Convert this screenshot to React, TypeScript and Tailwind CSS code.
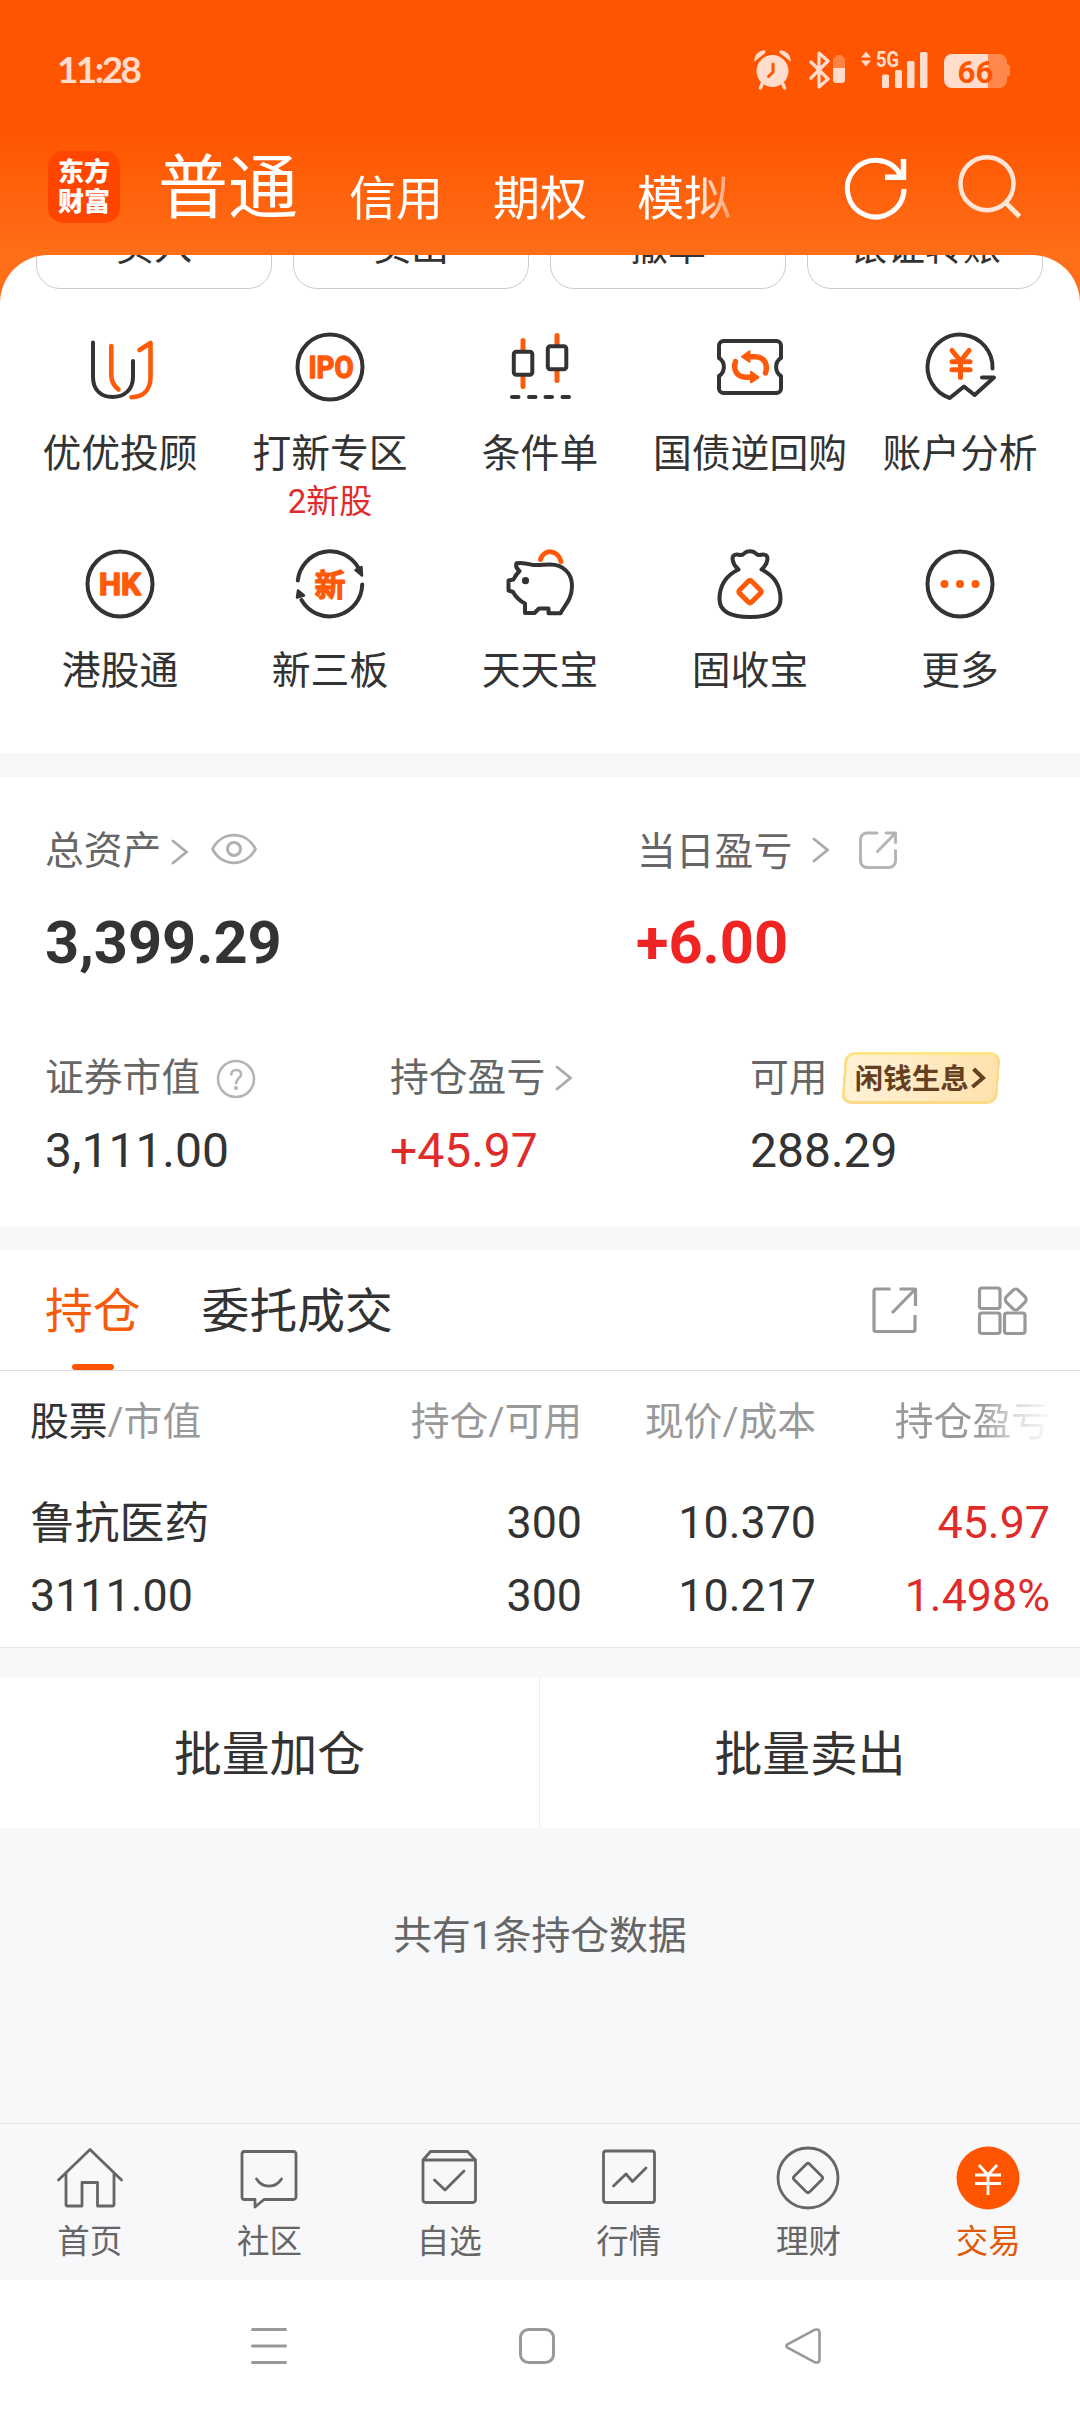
import type { ReactNode } from "react";

const FONT = "font-['Roboto','Noto_Sans_CJK_SC',sans-serif]";

/* ---------- status bar ---------- */

function StatusBar() {
  return (
    <div className="flex h-[140px] items-center pl-[57px] pr-[70px] text-white">
      <span className="mb-[4px] font-['Lato','Roboto',sans-serif] text-[37px] leading-none font-bold tracking-[-2.6px] text-[#ffdccb]">
        11:28
      </span>
      <div className="ml-auto flex items-center">
        <svg width="38" height="40" viewBox="754 50 38 40" fill="#ffdccb">
          <circle cx="772.5" cy="71" r="16" />
          <path d="M755 60a10 10 0 0 1 9-9c1 0 1 1 0 2zM790 60a10 10 0 0 0-9-9c-1 0-1 1 0 2z" stroke="#ffdccb" strokeWidth="1.6" />
          <path d="M762 84l-1.500 4M783 84l1.500 4" stroke="#ffdccb" strokeWidth="3.500" strokeLinecap="round" />
          <path d="M773 64v8l-4.500 4.500" fill="none" stroke="#ff5500" strokeWidth="3" strokeLinecap="round" />
        </svg>
        <svg className="ml-[17px]" width="37" height="40" viewBox="809 50 37 40">
          <path d="M811 62l17 17-9 8V53l9 8-17 17" fill="none" stroke="#ffdccb" strokeWidth="3.200" strokeLinejoin="round" strokeLinecap="round" />
          <path d="M833 68V60a3 3 0 0 1 3-3v-1a1 1 0 0 1 1-1h4a1 1 0 0 1 1 1v1a3 3 0 0 1 3 3v8z" fill="#ff8345" />
          <path d="M833 68h12v12a3 3 0 0 1-3 3h-6a3 3 0 0 1-3-3z" fill="#ffdccb" />
        </svg>
        <svg className="ml-[14px] overflow-visible" width="68" height="40" viewBox="860 50 68 40" fill="#ffdccb">
          <path d="M866 51.500l5 6h-10zM866 66.500l5-6h-10z" />
          <text x="876" y="67" textLength="23" lengthAdjust="spacingAndGlyphs" className="font-['Roboto',sans-serif] text-[22px] font-bold">
            5G
          </text>
          <rect x="882" y="74.500" width="7" height="13.500" rx="1.500" />
          <rect x="895" y="70" width="7" height="18" rx="1.500" />
          <rect x="907" y="61" width="7.500" height="27" rx="1.500" />
          <rect x="920" y="52" width="7.500" height="36" rx="1.500" />
        </svg>
        <svg className="ml-[15px]" width="67" height="40" viewBox="943 50 67 40">
          <path d="M988 54h11a8 8 0 0 1 8 8v2.500a2.500 2.500 0 0 1 3 2.500v7a2.500 2.500 0 0 1-3 2.500V80a8 8 0 0 1-8 8h-11z" fill="#ff884c" />
          <path d="M988 54h-36a8 8 0 0 0-8 8v18a8 8 0 0 0 8 8h36z" fill="#ffdccb" />
          <text x="957.500" y="83" textLength="36" lengthAdjust="spacingAndGlyphs" fill="#ff5500" className="font-['Roboto',sans-serif] text-[32px] font-bold">
            66
          </text>
        </svg>
      </div>
    </div>
  );
}

/* ---------- header ---------- */

function Header() {
  return (
    <header className="flex h-[115px] pl-[48px] text-white">
      <div className="mt-[11px] flex h-[72px] w-[72px] flex-col items-center justify-center rounded-[15px] bg-[#ff4600] text-[26px] leading-[30px] font-black">
        <span>东方</span>
        <span>财富</span>
      </div>
      <span className="ml-[38px] mt-[14px] text-[70px] leading-[70px]">普通</span>
      <nav className="ml-[51px] mt-[35px] flex h-[47px] w-[389px] gap-[50px] text-[47px] leading-[47px] [mask-image:linear-gradient(to_right,black_345px,transparent_405px)]">
        <span>信用</span>
        <span>期权</span>
        <span>模拟</span>
      </nav>
      <svg className="ml-[105px] mt-[14px]" width="66" height="68" viewBox="843 154 66 68" fill="none" stroke="#fff" strokeWidth="5">
        <path d="M904 189a28.300 28.300 0 1 1-3.500-14" />
        <path d="M903.500 159v18.300H885" strokeWidth="5.500" />
      </svg>
      <svg className="ml-[47px] mt-[12px]" width="68" height="68" viewBox="956 152 68 68" fill="none" stroke="#ffe6d9" strokeWidth="4.500">
        <circle cx="987" cy="183.700" r="26.500" />
        <path d="M1005.500 202.500l14 14" strokeWidth="5" />
      </svg>
    </header>
  );
}

const QUICK = ["买入", "卖出", "撤单", "银证转账"];

function QuickActions() {
  return (
    <div className="flex h-[34px] items-end gap-[21px] overflow-hidden pr-[37px] pl-[36px]">
      {QUICK.map((label) => (
        <div key={label} className="flex h-[84px] flex-1 items-center justify-center rounded-[24px] border border-[#ccc] text-[38px] leading-none text-[#333]">
          {label}
        </div>
      ))}
    </div>
  );
}

/* ---------- feature grid ---------- */

const INK = "#333";
const ORANGE = "#ff5a0a";

function FeatureIcon({ children }: { children: ReactNode }) {
  return (
    <svg width="80" height="80" viewBox="0 0 80 80" fill="none" stroke={INK} strokeWidth="4" strokeLinecap="round" strokeLinejoin="round">
      {children}
    </svg>
  );
}

const FEATURES: { label: string; note?: string; icon: ReactNode }[] = [
  {
    label: "优优投顾",
    icon: (
      <>
        <path d="M13 15.500V50C13 63 21 70 32.500 70S53 63 53 50V34" />
        <path d="M31.300 19V48Q31.300 57 38.500 62.500" stroke={ORANGE} strokeWidth="4.600" />
        <path d="M59.500 23L70.500 16V50C70.500 63 63 70 51.500 70.300" stroke={ORANGE} strokeWidth="4.600" />
      </>
    ),
  },
  {
    label: "打新专区",
    note: "2新股",
    icon: (
      <>
        <circle cx="40" cy="40" r="32.500" />
        <text x="18.500" y="51" textLength="45" lengthAdjust="spacingAndGlyphs" fill={ORANGE} stroke={ORANGE} strokeWidth="1.500" className="font-['Roboto',sans-serif] text-[31px] font-bold">
          IPO
        </text>
      </>
    ),
  },
  {
    label: "条件单",
    icon: (
      <>
        <path d="M23 13.500V23M23 50v9.500M57 8.500V18M57 45v8.500" stroke={ORANGE} strokeWidth="5" />
        <rect x="13.800" y="24.700" width="18.500" height="23" rx="2.500" />
        <rect x="47.800" y="19.200" width="18.500" height="23" rx="2.500" />
        <path d="M12 70h6.500M29 70h6.500M45.500 70h6.500M62.500 70H69" />
      </>
    ),
  },
  {
    label: "国债逆回购",
    icon: (
      <>
        <path d="M13.500 14H66.500a4.500 4.500 0 0 1 4.500 4.500V31C64.500 35 64.500 45 71 49V61.500a4.500 4.500 0 0 1-4.500 4.500H13.500a4.500 4.500 0 0 1-4.500-4.500V49C15.500 45 15.500 35 9 31V18.500a4.500 4.500 0 0 1 4.500-4.500z" />
        <path d="M55.500 46C58 38 55 29.800 45 29.800H39M25.500 34.500C23 42 26 50.200 36 50.200H42" stroke={ORANGE} strokeWidth="5.500" />
        <path d="M32 29.700l7.500-5.500v10.500zM48.500 50.300l-7.500-5.500v10.500z" fill={ORANGE} stroke={ORANGE} strokeWidth="2" />
      </>
    ),
  },
  {
    label: "账户分析",
    icon: (
      <>
        <path d="M72.500 41.500A32.500 32.500 0 1 0 29.800 71L44 59.500 54.600 68 74 50.500H62" />
        <path d="M32 23.500l8.500 10.500L49 23.500M32 34.700h18M32 42.700h18M40.500 34v16.500" stroke={ORANGE} strokeWidth="5" />
      </>
    ),
  },
  {
    label: "港股通",
    icon: (
      <>
        <circle cx="40" cy="40" r="32.500" />
        <text x="19" y="51" textLength="42" lengthAdjust="spacingAndGlyphs" fill={ORANGE} stroke={ORANGE} strokeWidth="1.500" className="font-['Roboto',sans-serif] text-[31px] font-bold">
          HK
        </text>
      </>
    ),
  },
  {
    label: "新三板",
    icon: (
      <>
        <path d="M7.800 36.500A32.500 32.500 0 0 1 68.500 24M72.200 40.500A32.500 32.500 0 0 1 11.500 56" />
        <path d="M72 31.500l-6.500-5.500 6-3zM8 46.500l6 5-7 2z" fill={INK} strokeWidth="2.500" />
        <text x="40" y="51.500" textAnchor="middle" fill={ORANGE} stroke={ORANGE} strokeWidth="1.200" className="font-['Noto_Sans_CJK_SC',sans-serif] text-[31px] font-bold">
          新
        </text>
      </>
    ),
  },
  {
    label: "天天宝",
    icon: (
      <>
        <path d="M40.500 15.500C44 4.500 58 5.500 61 17.500" stroke={ORANGE} strokeWidth="5" />
        <path d="M33 21C27 19.500 22 18 16.500 19.300C15.500 22 17 25 19.500 27C17 29.500 15 32 13.500 35.500L8.500 36.500V46.500L13 48C15.500 52.500 19 56.500 25 59.500V69H34.500L39 64.500H48.500V69.300H60.500C64 62 72 56 72 42C72 29 63 20.500 50 20.500C44 20.500 40 21.500 33 21Z" />
        <circle cx="25.500" cy="36.700" r="3.600" fill={INK} stroke="none" />
      </>
    ),
  },
  {
    label: "固收宝",
    icon: (
      <>
        <path d="M28.500 25.500C22 20 21 12 25 10.800C28 9.800 31 12.500 33.500 10C37 6.300 43 6.300 46.500 10C49 12.500 52 9.800 55 10.800C59 12 58 20 51.500 25.500C63 31 70.500 41 70.500 55C70.500 68 58 73 40 73S9.500 68 9.500 55C9.500 41 17 31 28.500 25.500Z" />
        <rect x="31.500" y="39.200" width="17" height="17" rx="2" transform="rotate(45 40 47.700)" stroke={ORANGE} strokeWidth="5" />
      </>
    ),
  },
  {
    label: "更多",
    icon: (
      <>
        <circle cx="40" cy="40" r="32.500" />
        <g fill={ORANGE} stroke="none">
          <circle cx="24.500" cy="40" r="4" />
          <circle cx="40" cy="40" r="4" />
          <circle cx="55.500" cy="40" r="4" />
        </g>
      </>
    ),
  },
];

function FeatureGrid() {
  return (
    <div className="mt-[38px] grid grid-cols-5 px-[15px]">
      {FEATURES.map((f) => (
        <div key={f.label} className="flex h-[217px] flex-col items-center">
          <FeatureIcon>{f.icon}</FeatureIcon>
          <span className="mt-[27px] text-[38.800px] leading-[40px] whitespace-nowrap text-[#333]">{f.label}</span>
          {f.note && <span className="mt-[10px] text-[33px] leading-[36px] text-[#e02b2b]">{f.note}</span>}
        </div>
      ))}
    </div>
  );
}

/* ---------- assets ---------- */

function Chevron({ className }: { className?: string }) {
  return (
    <svg className={className} width="18" height="26" viewBox="0 0 18 26" fill="none" stroke="#aaa" strokeWidth="2.800" strokeLinecap="round">
      <path d="M2 2l13.500 11L2 24" />
    </svg>
  );
}

function Assets() {
  return (
    <section className="h-[449px] bg-white pt-[49px] pl-[45px] text-[#333]">
      <div className="grid h-[48px] grid-cols-[592px_1fr] text-[38.800px] leading-[48px] text-[#666]">
        <div className="flex items-center">
          <span>总资产</span>
          <Chevron className="mt-[2px] ml-[10px]" />
          <svg className="ml-[21px] mt-[-4px]" width="48" height="34" viewBox="0 0 48 34" fill="none" stroke="#b0b0b0" strokeWidth="2.800">
            <path d="M2.500 17C12 -1.500 36 -1.500 45.500 17C36 35.500 12 35.500 2.500 17Z" strokeLinejoin="round" />
            <circle cx="24" cy="17" r="6.500" strokeWidth="3" />
          </svg>
        </div>
        <div className="flex items-center">
          <span className="mt-[2px]">当日盈亏</span>
          <Chevron className="ml-[20px] mt-[-3px]" />
          <svg className="ml-[28px] mt-[-2px]" width="40" height="40" viewBox="0 0 40 40" fill="none" stroke="#b5b5b5" strokeWidth="3" strokeLinecap="round" strokeLinejoin="round">
            <path d="M19 3H9a6.500 6.500 0 0 0-6.500 6.500V31A6.500 6.500 0 0 0 9 37.500H31a6.500 6.500 0 0 0 6.500-6.500V20.500M28 3h9.500v9.500M37 3.500L19.500 21.500" />
          </svg>
        </div>
      </div>
      <div className="mt-[39px] grid h-[60px] grid-cols-[591px_1fr] text-[59.500px] leading-[60px] font-bold">
        <span>3,399.29</span>
        <span className="text-[#f12424]">+6.00</span>
      </div>
      <div className="mt-[79px] grid h-[52px] grid-cols-[345px_360px_1fr] text-[38.800px] leading-[50px] text-[#666]">
        <div className="flex items-center">
          <span>证券市值</span>
          <svg className="mt-[1px] ml-[16px]" width="40" height="40" viewBox="0 0 40 40" fill="none" stroke="#b5b5b5" strokeWidth="2.600" strokeLinecap="round">
            <circle cx="20" cy="20" r="18" />
            <path d="M15.300 15.500c0-6 9.800-6 9.800-.3 0 3.800-5 4.200-5 9" />
            <circle cx="20" cy="29" r="1.300" fill="#b5b5b5" strokeWidth="1.500" />
          </svg>
        </div>
        <div className="flex items-center">
          <span>持仓盈亏</span>
          <Chevron className="ml-[10px]" />
        </div>
        <div className="flex items-center">
          <span>可用</span>
          <div className="ml-[15px] flex h-[52px] w-[156px] -skew-x-[4deg] items-center justify-center rounded-[10px] border-[3px] border-[#fddb86] border-t-[#ffe787] bg-linear-to-r from-[#fff2d6] to-[#ffe2ad] text-[28.500px] leading-[46px] font-bold text-[#643f22]">
            <span className="mt-[3px] skew-x-[4deg]">闲钱生息</span>
            <svg className="ml-[2px]" width="16" height="24" viewBox="0 0 16 24" fill="none" stroke="#643f22" strokeWidth="4">
              <path d="M2 3l10 9-10 9" />
            </svg>
          </div>
        </div>
      </div>
      <div className="mt-[22px] grid h-[48px] grid-cols-[345px_360px_1fr] text-[48px] leading-[49px]">
        <span>3,111.00</span>
        <span className="text-[#e02b2b]">+45.97</span>
        <span>288.29</span>
      </div>
    </section>
  );
}

/* ---------- holdings ---------- */

function Holdings() {
  return (
    <section className="bg-white text-[#333]">
      <div className="flex h-[121px] border-b border-[#ddd] pl-[45px] pr-[52px] text-[47.800px] leading-[124px]">
        <div className="relative h-[120px] text-[#f45c0c]">
          持仓
          <span className="absolute bottom-0 left-[27px] h-[6px] w-[42px] rounded-[3px] bg-[#ff5500]" />
        </div>
        <span className="ml-[61px]">委托成交</span>
        <div className="mt-[34px] ml-auto flex h-[52px] items-center gap-[57px]">
          <svg width="50" height="50" viewBox="0 0 50 50" fill="none" stroke="#999" strokeWidth="3.200" strokeLinejoin="round">
            <path d="M20.500 4H6a2 2 0 0 0-2 2V44.500a2 2 0 0 0 2 2H43a2 2 0 0 0 2-2V30M29.500 4H45.500V21M45 4.500L22 28" />
          </svg>
          <svg width="51" height="51" viewBox="0 0 51 51" fill="none" stroke="#999" strokeWidth="3.200">
            <rect x="2.500" y="3" width="20.500" height="20.500" rx="2.500" />
            <rect x="2.500" y="28" width="20.500" height="20.500" rx="2.500" />
            <rect x="27.500" y="28" width="20.500" height="20.500" rx="2.500" />
            <rect x="30.200" y="6" width="17" height="17" rx="4" transform="rotate(45 38.700 14.500)" />
          </svg>
        </div>
      </div>
      <div className="grid h-[276px] grid-cols-[317px_235px_234px_234px] grid-rows-[102px_102px_44px] pl-[30px] text-right text-[44.800px] leading-[44px]">
        <span className="text-left text-[38.800px] leading-[101px] text-[#999]">
          <span className="text-[#333]">股票</span>/市值
        </span>
        <span className="text-[38.800px] leading-[101px] text-[#999]">持仓/可用</span>
        <span className="text-[38.800px] leading-[101px] text-[#999]">现价/成本</span>
        <span className="text-[38.800px] leading-[101px] text-[#999] [mask-image:linear-gradient(to_right,black_165px,rgba(0,0,0,0.35)_200px,rgba(0,0,0,0.08)_232px)]">
          持仓盈亏
        </span>
        <span className="text-left leading-[102px]">鲁抗医药</span>
        <span className="leading-[100px]">300</span>
        <span className="leading-[100px]">10.370</span>
        <span className="leading-[100px] text-[#e02b2b]">45.97</span>
        <span className="text-left leading-[42px]">3111.00</span>
        <span className="leading-[42px]">300</span>
        <span className="leading-[42px]">10.217</span>
        <span className="leading-[42px] text-[#e02b2b]">1.498%</span>
      </div>
    </section>
  );
}

/* ---------- bottom tabs ---------- */

const TABS: { label: string; icon: ReactNode }[] = [
  {
    label: "首页",
    icon: <path d="M3.500 37L35 6.500 66.500 37M11 31V61.500a1.500 1.500 0 0 0 1.500 1.500H27V39.500H42.500V63H57.500a1.500 1.500 0 0 0 1.500-1.500V31" />,
  },
  {
    label: "社区",
    icon: (
      <>
        <path d="M9.500 8.500H59.500a2.500 2.500 0 0 1 2.500 2.500V54a2.500 2.500 0 0 1-2.500 2.500H30L21 64V56.500H10.500A2.500 2.500 0 0 1 8 54V11a2.500 2.500 0 0 1 2.500-2.500z" />
        <path d="M22.500 36c6 9.500 19 9.500 25 0" />
      </>
    ),
  },
  {
    label: "自选",
    icon: (
      <>
        <path d="M9 17L16.500 8.500H53.500L61.500 17M9 17H61.500V57a2.500 2.500 0 0 1-2.500 2.500H11.500A2.500 2.500 0 0 1 9 57z" />
        <path d="M20.500 37L31 47 50 28" />
      </>
    ),
  },
  {
    label: "行情",
    icon: (
      <>
        <rect x="9.500" y="8" width="51" height="51.500" rx="2.500" />
        <path d="M19.500 43L32 31 38.500 38.500 52 25" />
      </>
    ),
  },
  {
    label: "理财",
    icon: (
      <>
        <circle cx="35" cy="35" r="30" />
        <rect x="24" y="24" width="22" height="22" rx="2.500" transform="rotate(45 35 35)" />
      </>
    ),
  },
  {
    label: "交易",
    icon: (
      <>
        <circle cx="35" cy="35" r="31.500" fill="#ff5500" stroke="none" />
        <path d="M26 22l9 10 9-10M22 32h26M22 40.500h26M35 32v20" stroke="#fff" strokeLinecap="butt" />
      </>
    ),
  },
];

function TabBar() {
  return (
    <nav className="grid h-[157px] grid-cols-6 border-t border-[#e0e0e2] bg-[#f8f8fa] pr-[2px]">
      {TABS.map((t) => (
        <div key={t.label} className="flex flex-col items-center pt-[19px]">
          <svg width="70" height="70" viewBox="0 0 70 70" fill="none" stroke="#666" strokeWidth="2.800" strokeLinejoin="round" strokeLinecap="round">
            {t.icon}
          </svg>
          <span className={t.label === "交易" ? "mt-[9px] text-[32.500px] leading-[40px] text-[#e05a0c]" : "mt-[9px] text-[32.500px] leading-[40px] text-[#666]"}>
            {t.label}
          </span>
        </div>
      ))}
    </nav>
  );
}

function SystemNav() {
  return (
    <div className="flex h-[132px] items-center bg-white pl-[249px]">
      <svg width="40" height="40" viewBox="0 0 40 40" stroke="#999" strokeWidth="3" strokeLinecap="round">
        <path d="M3.500 3.500h33M3.500 20h33M3.500 36.500h33" />
      </svg>
      <svg className="ml-[228px]" width="40" height="40" viewBox="0 0 40 40" fill="none" stroke="#999" strokeWidth="3">
        <rect x="3.500" y="3.500" width="33" height="33" rx="8" />
      </svg>
      <svg className="ml-[226px]" width="40" height="40" viewBox="0 0 40 40" fill="none" stroke="#999" strokeWidth="2.600" strokeLinejoin="round">
        <path d="M4.500 18.300L32 3.700Q36.500 2.500 36.500 6.500V33.500Q36.500 37.500 32 36.300L4.500 21.700Q2 20 4.500 18.300Z" />
      </svg>
    </div>
  );
}

export default function App() {
  return (
    <div className={`flex h-[2412px] w-[1080px] flex-col overflow-hidden bg-[#f7f8fa] ${FONT}`}>
      <div className="bg-[linear-gradient(to_bottom,#ff5500_0px,#ff5500_130px,#ff6e18_255px,#ff6e18_310px)]">
        <StatusBar />
        <Header />
        <div className="h-[498px] overflow-hidden rounded-t-[48px] bg-white">
          <QuickActions />
          <FeatureGrid />
        </div>
      </div>
      <div className="h-[24px]" />
      <Assets />
      <div className="h-[24px]" />
      <Holdings />
      <div className="h-[31px] border-t border-[#e8e9eb]" />
      <div className="grid h-[150px] grid-cols-2 bg-white text-center text-[47.800px] leading-[155px] text-[#333]">
        <span className="h-[150px] border-r border-[#eee]">批量加仓</span>
        <span className="h-[150px]">批量卖出</span>
      </div>
      <p className="mt-[88px] text-center text-[38.800px] leading-[40px] text-[#666]">共有1条持仓数据</p>
      <div className="mt-auto">
        <TabBar />
        <SystemNav />
      </div>
    </div>
  );
}
